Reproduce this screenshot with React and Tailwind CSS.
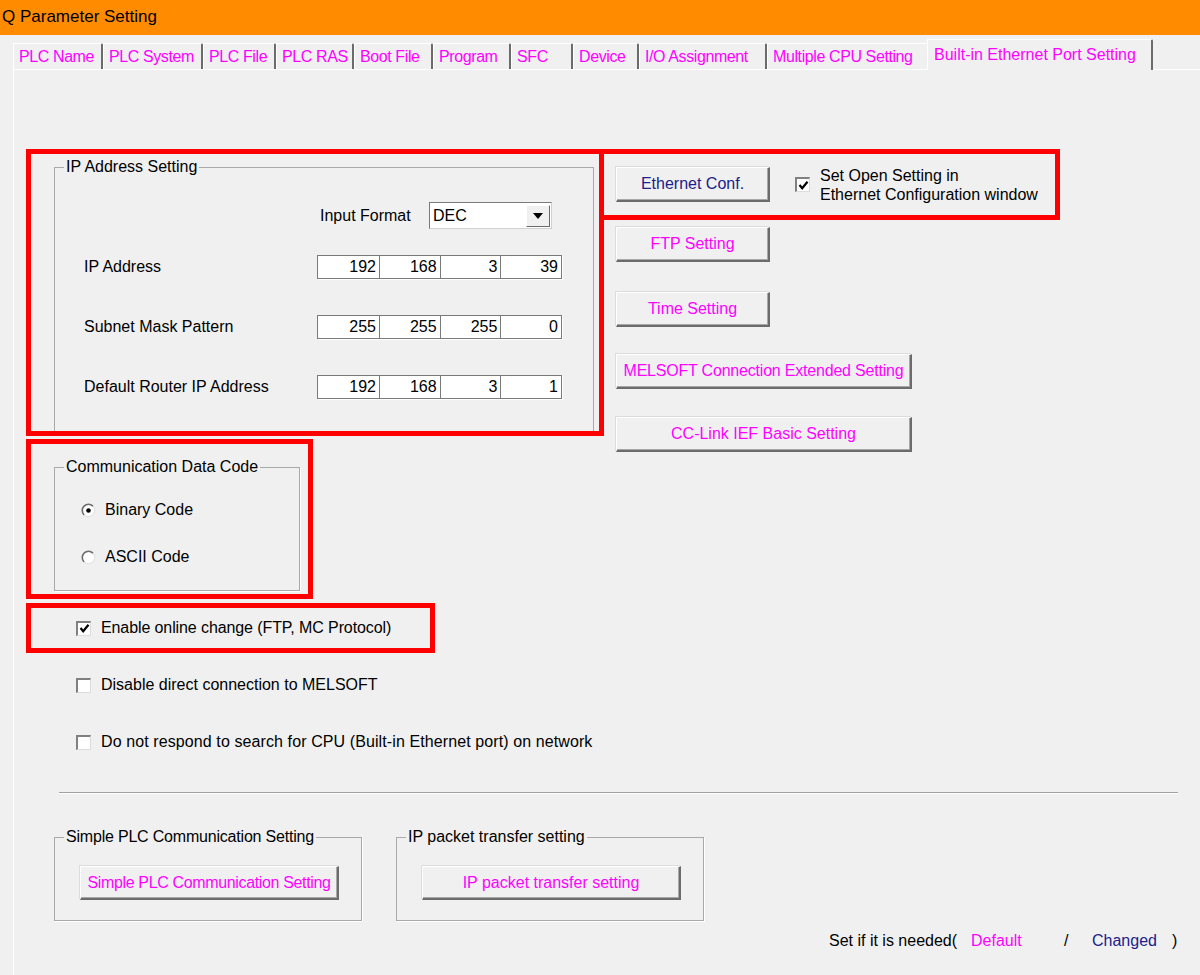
import React from "react";

const PINK = "text-[#ff00ff]";
const BTN =
  "flex items-center justify-center bg-[#f0f0f0] border-t border-l border-t-white border-l-white border-r-2 border-b-2 border-r-[#6b6b6b] border-b-[#6b6b6b] shadow-[inset_-1px_-1px_0_#a8a8a8,-1px_-1px_0_#dcdcdc] leading-[18px]";
const FIELDSET = "border border-[#a9a9a9] shadow-[1px_1px_0_#ffffff]";

function CheckBox({ checked }) {
  return (
    <span className="w-[15px] h-[15px] shrink-0 bg-white border-t-2 border-l-2 border-t-[#808080] border-l-[#808080] border-r border-b border-r-[#dcdcdc] border-b-[#dcdcdc] flex items-center justify-center">
      {checked && (
        <svg width="11" height="11" viewBox="0 0 11 11">
          <path d="M1.5 5 L4.2 8.2 L9.5 1.8" stroke="#000" strokeWidth="2.2" fill="none" />
        </svg>
      )}
    </span>
  );
}

function Radio({ checked }) {
  return (
    <svg width="15" height="15" viewBox="0 0 15 15" className="shrink-0">
      <circle cx="7.5" cy="7.5" r="6.2" fill="#fff" stroke="#e2e2e2" strokeWidth="1.2" />
      <path d="M3.1 11.9 A6.2 6.2 0 0 1 11.9 3.1" stroke="#6e6e6e" strokeWidth="1.6" fill="none" />
      {checked && <circle cx="7.5" cy="7.5" r="2.3" fill="#000" />}
    </svg>
  );
}

function IpField({ values }) {
  return (
    <div className="flex h-[24px] w-[245px] bg-white border border-[#7a7a7a] shadow-[1px_1px_0_#ffffff]">
      {values.map((v, i) => (
        <div
          key={i}
          className={
            i === 0
              ? "w-[61px] text-right pr-[3px] leading-[22px]"
              : "flex-1 border-l border-[#7a7a7a] text-right pr-[3px] leading-[22px]"
          }
        >
          {v}
        </div>
      ))}
    </div>
  );
}

function Tab({ w, label, noRight }) {
  return (
    <div
      className={
        w +
        " h-[26px] flex items-center pl-[5px] bg-[#f0f0f0] border-t border-l border-t-white border-l-white " +
        (noRight ? "" : "border-r-2 border-r-[#6b6b6b] rounded-tr-[2px]")
      }
    >
      <span className={PINK + " whitespace-nowrap tracking-[-0.4px] leading-[18px]"}>{label}</span>
    </div>
  );
}

export default function App() {
  return (
    <div className="w-[1200px] h-[975px] bg-[#f0f0f0] flex flex-col overflow-hidden font-['Liberation_Sans',Arial,sans-serif] text-[16px] text-black">
      {/* Title bar */}
      <div className="h-[35px] bg-[#ff8c00] flex items-center pl-[2px] pb-[2px] shrink-0">
        <span className="text-[17px] leading-[20px]">Q Parameter Setting</span>
      </div>

      {/* Tabs */}
      <div className="h-[34px] flex items-end pl-[13px] shrink-0">
        <Tab w="w-[90px]" label="PLC Name" />
        <Tab w="w-[100px]" label="PLC System" />
        <Tab w="w-[73px]" label="PLC File" />
        <Tab w="w-[78px]" label="PLC RAS" />
        <Tab w="w-[79px]" label="Boot File" />
        <Tab w="w-[78px]" label="Program" />
        <Tab w="w-[62px]" label="SFC" />
        <Tab w="w-[66px]" label="Device" />
        <Tab w="w-[128px]" label="I/O Assignment" />
        <Tab w="w-[160px]" label="Multiple CPU Setting" noRight />
        <div className="w-[226px] h-[31px] mb-[-1px] relative z-10 flex items-center pl-[6px] bg-[#f0f0f0] border-t border-l border-t-white border-l-white border-r-2 border-r-[#6b6b6b] rounded-tr-[2px]">
          <span className={PINK + " whitespace-nowrap leading-[18px]"}>Built-in Ethernet Port Setting</span>
        </div>
      </div>

      {/* Panel */}
      <div className="flex-1 ml-[13px] border-t border-l border-white pl-[12px] pt-[79px]">
        <div className="flex items-start">
          {/* Left column */}
          <div className="flex flex-col w-[578px] shrink-0">
            <div className="h-[287px] border-[5px] border-[#ff0000]">
              <fieldset className={FIELDSET + " ml-[23px] mt-[4px] w-[540px] h-[273px] border-b-0 shadow-none"}>
                <legend className="ml-[9px] px-[2px] leading-[18px]">IP Address Setting</legend>
                <div className="flex items-center h-[27px] mt-[26px]">
                  <span className="ml-[265px] w-[109px] leading-[18px]">Input Format</span>
                  <div className="w-[123px] h-[27px] bg-white border border-t-[#7a7a7a] border-l-[#7a7a7a] border-r-[#d0d0d0] border-b-[#d0d0d0] flex items-center justify-between">
                    <span className="pl-[3px] leading-[18px]">DEC</span>
                    <div className="w-[24px] h-[22px] mr-[1px] bg-[#f0f0f0] border-t border-l border-t-white border-l-white border-r border-b border-r-[#6b6b6b] border-b-[#6b6b6b] flex items-center justify-center">
                      <svg width="10" height="6" viewBox="0 0 10 6">
                        <path d="M0 0 L10 0 L5 6 Z" fill="#000" />
                      </svg>
                    </div>
                  </div>
                </div>
                <div className="flex items-center h-[24px] mt-[26px] pl-[29px]">
                  <span className="w-[233px] leading-[18px]">IP Address</span>
                  <IpField values={["192", "168", "3", "39"]} />
                </div>
                <div className="flex items-center h-[24px] mt-[36px] pl-[29px]">
                  <span className="w-[233px] leading-[18px]">Subnet Mask Pattern</span>
                  <IpField values={["255", "255", "255", "0"]} />
                </div>
                <div className="flex items-center h-[24px] mt-[36px] pl-[29px]">
                  <span className="w-[233px] leading-[18px]">Default Router IP Address</span>
                  <IpField values={["192", "168", "3", "1"]} />
                </div>
              </fieldset>
            </div>

            <div className="mt-[3px] h-[160px] w-[287px] border-[5px] border-[#ff0000]">
              <fieldset className={FIELDSET + " ml-[23px] mt-[14px] w-[246px] h-[133px]"}>
                <legend className="ml-[9px] px-[2px] leading-[18px]">Communication Data Code</legend>
                <div className="flex items-center h-[20px] mt-[24px] pl-[26px] gap-[9px]">
                  <Radio checked />
                  <span className="leading-[18px]">Binary Code</span>
                </div>
                <div className="flex items-center h-[20px] mt-[27px] pl-[26px] gap-[9px]">
                  <Radio />
                  <span className="leading-[18px]">ASCII Code</span>
                </div>
              </fieldset>
            </div>

            <div className="mt-[4px] h-[50px] w-[409px] border-[5px] border-[#ff0000] flex items-center pl-[45px] gap-[10px]">
              <CheckBox checked />
              <span className="leading-[18px] tracking-[-0.1px]">Enable online change (FTP, MC Protocol)</span>
            </div>

            <div className="mt-[22px] h-[20px] flex items-center pl-[50px] gap-[10px]">
              <CheckBox />
              <span className="leading-[18px] whitespace-nowrap">Disable direct connection to MELSOFT</span>
            </div>
            <div className="mt-[37px] h-[20px] flex items-center pl-[50px] gap-[10px]">
              <CheckBox />
              <span className="leading-[18px] whitespace-nowrap tracking-[0.1px]">
                Do not respond to search for CPU (Built-in Ethernet port) on network
              </span>
            </div>
          </div>

          {/* Right column */}
          <div className="flex flex-col -ml-[5px]">
            <div className="w-[461px] h-[71px] border-[5px] border-[#ff0000] flex items-center pl-[12px]">
              <div className={BTN + " w-[154px] h-[35px] text-[#20208a]"}>Ethernet Conf.</div>
              <div className="ml-[25px] flex items-center gap-[10px]">
                <CheckBox checked />
                <div className="leading-[19px]">
                  <div>Set Open Setting in</div>
                  <div>Ethernet Configuration window</div>
                </div>
              </div>
            </div>
            <div className={BTN + " " + PINK + " ml-[17px] mt-[7px] w-[154px] h-[35px]"}>FTP Setting</div>
            <div className={BTN + " " + PINK + " ml-[17px] mt-[30px] w-[154px] h-[35px]"}>Time Setting</div>
            <div className={BTN + " " + PINK + " ml-[17px] mt-[27px] w-[296px] h-[35px] whitespace-nowrap tracking-[-0.2px]"}>
              MELSOFT Connection Extended Setting
            </div>
            <div className={BTN + " " + PINK + " ml-[17px] mt-[28px] w-[296px] h-[35px]"}>CC-Link IEF Basic Setting</div>
          </div>
        </div>

        {/* Separator */}
        <div className="mt-[40px] ml-[33px] w-[1119px] h-[2px] border-t border-t-[#a0a0a0] border-b border-b-white" />

        {/* Bottom groups */}
        <div className="flex mt-[34px] ml-[28px] gap-[34px]">
          <fieldset className={FIELDSET + " w-[308px] h-[93px]"}>
            <legend className="ml-[9px] px-[2px] leading-[18px] tracking-[-0.2px]">Simple PLC Communication Setting</legend>
            <div className={BTN + " " + PINK + " mt-[20px] ml-[25px] w-[259px] h-[34px] whitespace-nowrap tracking-[-0.35px]"}>
              Simple PLC Communication Setting
            </div>
          </fieldset>
          <fieldset className={FIELDSET + " w-[308px] h-[93px]"}>
            <legend className="ml-[9px] px-[2px] leading-[18px]">IP packet transfer setting</legend>
            <div className={BTN + " " + PINK + " mt-[20px] ml-[25px] w-[259px] h-[34px]"}>IP packet transfer setting</div>
          </fieldset>
        </div>

        {/* Footer legend */}
        <div className="mt-[10px] ml-[803px] flex items-center h-[19px] leading-[19px] whitespace-nowrap">
          <span className="w-[142px]">Set if it is needed(</span>
          <span className={PINK + " w-[93px]"}>Default</span>
          <span className="w-[28px]">/</span>
          <span className="w-[80px] text-[#20208a]">Changed</span>
          <span>)</span>
        </div>
      </div>
    </div>
  );
}
